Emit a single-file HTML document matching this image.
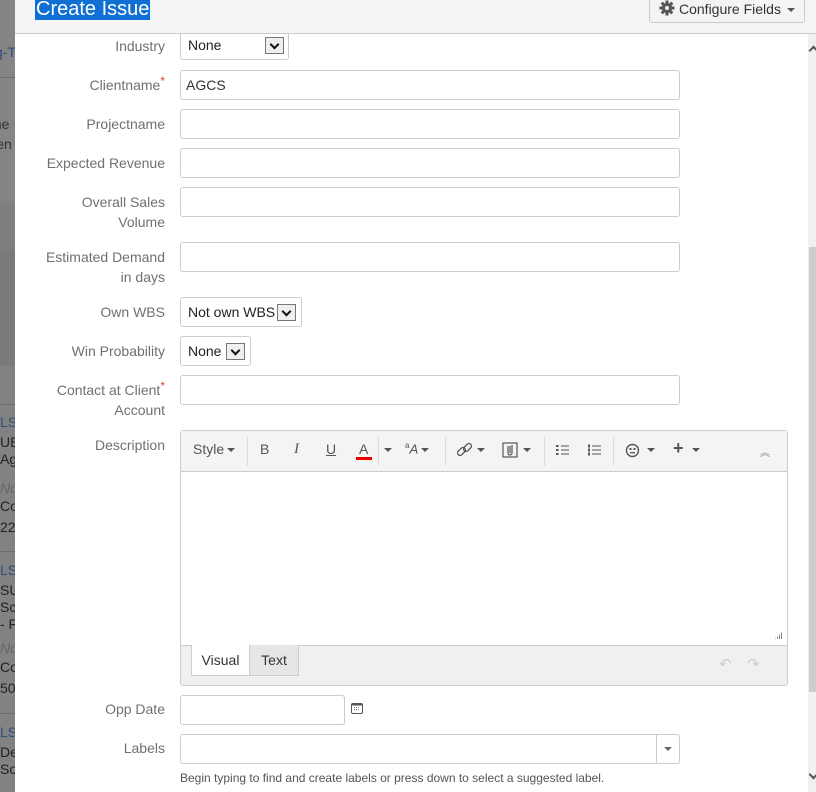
<!DOCTYPE html>
<html><head><meta charset="utf-8"><style>
*{box-sizing:border-box;margin:0;padding:0}
body{width:816px;height:792px;overflow:hidden;background:#fff;font-family:"Liberation Sans",Arial,sans-serif;position:relative}
.a{position:absolute;white-space:nowrap}
.lbl{position:absolute;right:651px;font-size:14px;color:#707070;text-align:right;line-height:20px;white-space:nowrap}
.inp{position:absolute;left:180px;width:500px;height:30px;border:1px solid #ccc;border-radius:3px;background:#fff;font-size:14px;color:#333;padding:6px 5px}
.sel{position:absolute;left:180px;height:30px;border:1px solid #ccc;border-radius:3px;background:#fff;font-size:14px;color:#222;padding:6px 7px;white-space:nowrap}
.dd{position:absolute;top:6px;width:19px;height:17px;border:1px solid #767676;background:#efefef}
.dd:after{content:"";position:absolute;left:5px;top:3px;width:5px;height:5px;border-right:2px solid #111;border-bottom:2px solid #111;transform:rotate(45deg)}
.req{color:#d04437;font-size:12px;vertical-align:top;position:relative;top:-4px}
.tb{position:absolute;top:441px;font-size:14px;color:#555;white-space:nowrap}
.car{display:inline-block;width:0;height:0;border-left:4px solid transparent;border-right:4px solid transparent;border-top:4px solid #555;vertical-align:middle;margin-left:3px}
.sep{position:absolute;top:437px;width:1px;height:29px;background:#ddd}
</style></head><body>
<div class="a" style="left:0;top:0;width:15px;height:792px;background:#828282;overflow:hidden;font-size:14px;line-height:20px">
 <div class="a" style="top:0;left:0;width:15px;height:200px;background:#858585"></div>
 <div class="a" style="top:42px;left:-5px;color:#2d4e7a">g-T</div>
 <div class="a" style="top:77px;left:0;width:15px;height:1px;background:#6e6e6e"></div>
 <div class="a" style="top:114px;left:-10px;color:#333">me</div>
 <div class="a" style="top:134px;left:-10px;color:#333">lien</div>
 <div class="a" style="top:205px;left:0;width:15px;height:45px;background:#7e7e7e"></div>
 <div class="a" style="top:250px;left:0;width:15px;height:116px;background:#7a7a7a"></div>
 <div class="a" style="top:404px;left:0;width:15px;height:1px;background:#6e6e6e"></div>
 <div class="a" style="top:412px;left:0;color:#2d4e7a">LS</div>
 <div class="a" style="top:434px;left:0;color:#222;line-height:17px">UE<br>Ag</div>
 <div class="a" style="top:478px;left:0;color:#666;font-style:italic">No</div>
 <div class="a" style="top:496px;left:0;color:#222">Co</div>
 <div class="a" style="top:517px;left:0;color:#222">22</div>
 <div class="a" style="top:551px;left:0;width:15px;height:1px;background:#6e6e6e"></div>
 <div class="a" style="top:560px;left:0;color:#2d4e7a">LS</div>
 <div class="a" style="top:582px;left:0;color:#222;line-height:17px">SU<br>Sc<br>- F</div>
 <div class="a" style="top:638px;left:0;color:#666;font-style:italic">No</div>
 <div class="a" style="top:657px;left:0;color:#222">Co</div>
 <div class="a" style="top:678px;left:0;color:#222">50</div>
 <div class="a" style="top:713px;left:0;width:15px;height:1px;background:#6e6e6e"></div>
 <div class="a" style="top:722px;left:0;color:#2d4e7a">LS</div>
 <div class="a" style="top:744px;left:0;color:#222;line-height:17px">De<br>So</div>
</div>

<div class="a" style="left:808px;top:34px;width:8px;height:758px;background:#f0f0f0"></div>
<div class="a" style="left:809px;top:247px;width:7px;height:445px;background:#cdcdcd"></div>
<div class="a" style="left:810px;top:47px;width:7px;height:7px;border-left:2px solid #555;border-top:2px solid #555;transform:rotate(45deg)"></div>
<div class="a" style="left:810px;top:771px;width:7px;height:7px;border-right:2px solid #555;border-bottom:2px solid #555;transform:rotate(45deg)"></div>

<div class="lbl" style="top:36px">Industry</div>
<div class="sel" style="top:30px;width:109px">None<span class="dd" style="left:84px"></span></div>

<div class="a" style="left:15px;top:0;width:801px;height:34px;background:#f5f5f5;border-bottom:1px solid #ccc"></div>
<div class="a" style="left:35px;top:-2px;height:22px;background:#0f6fd3;color:#fff;font-size:20px;line-height:22px;padding:0 1px">Create Issue</div>
<div class="a" style="left:649px;top:-6px;width:156px;height:29px;border:1px solid #ccc;border-radius:3px;background:#f4f4f4;font-size:14px;color:#333;padding:6px 0 0 29px;line-height:16px">Configure Fields<span class="car" style="margin-left:6px"></span></div>
<svg class="a" style="left:659px;top:0" width="16" height="16" viewBox="0 0 16 16"><g fill="#555"><circle cx="8" cy="8" r="5"/><rect x="6.5" y="0.5" width="3" height="15"/><rect x="0.5" y="6.5" width="15" height="3"/><rect x="6.5" y="0.5" width="3" height="15" transform="rotate(45 8 8)"/><rect x="6.5" y="0.5" width="3" height="15" transform="rotate(-45 8 8)"/></g><circle cx="8" cy="8" r="2" fill="#f4f4f4"/></svg>

<div class="lbl" style="top:75px">Clientname<span class="req">*</span></div>
<div class="inp" style="top:70px">AGCS</div>
<div class="lbl" style="top:114px">Projectname</div>
<div class="inp" style="top:109px"></div>
<div class="lbl" style="top:153px">Expected Revenue</div>
<div class="inp" style="top:148px"></div>
<div class="lbl" style="top:192px">Overall Sales<br>Volume</div>
<div class="inp" style="top:187px"></div>
<div class="lbl" style="top:247px">Estimated Demand<br>in days</div>
<div class="inp" style="top:242px"></div>
<div class="lbl" style="top:302px">Own WBS</div>
<div class="sel" style="top:297px;width:122px">Not own WBS<span class="dd" style="left:96px"></span></div>
<div class="lbl" style="top:341px">Win Probability</div>
<div class="sel" style="top:336px;width:71px">None<span class="dd" style="left:45px"></span></div>
<div class="lbl" style="top:380px">Contact at Client<span class="req">*</span><br>Account</div>
<div class="inp" style="top:375px"></div>
<div class="lbl" style="top:435px">Description</div>

<div class="a" style="left:180px;top:430px;width:608px;height:256px;border:1px solid #ccc;border-radius:3px;background:#fff;overflow:hidden">
 <div class="a" style="left:0;top:0;width:608px;height:41px;background:#f4f4f4;border-bottom:1px solid #ccc"></div>
 <div class="a" style="left:0;top:214px;width:608px;height:42px;background:#f0f0f0;border-top:1px solid #ccc"></div>
 <div class="a" style="left:10px;top:214px;width:59px;height:31px;background:#fff;border:1px solid #ccc;border-top:none;font-size:14px;color:#333;text-align:center;line-height:30px">Visual</div>
 <div class="a" style="left:69px;top:214px;width:49px;height:31px;background:#e6e6e6;border:1px solid #ccc;border-left:none;border-top:none;font-size:14px;color:#333;text-align:center;line-height:30px">Text</div>
 <div class="a" style="left:538px;top:224px;font-size:15px;color:#ccc">↶</div>
 <div class="a" style="left:566px;top:224px;font-size:15px;color:#ccc">↷</div>
 <div class="a" style="left:594px;top:200px;width:8px;height:8px;background:repeating-linear-gradient(90deg,#888 0 1px,transparent 1px 2px);clip-path:polygon(100% 0,100% 100%,0 100%)"></div>
</div>
<div class="tb" style="left:193px">Style<span class="car"></span></div>
<div class="sep" style="left:247px"></div>
<div class="tb" style="left:260px">B</div>
<div class="tb" style="left:294px;font-family:'Liberation Serif',serif;font-style:italic;font-size:15px">I</div>
<div class="tb" style="left:326px;text-decoration:underline">U</div>
<div class="tb" style="left:359px">A</div>
<div class="a" style="left:356px;top:457px;width:16px;height:3px;background:#e00"></div>
<div class="sep" style="left:378px;top:437px"></div>
<div class="tb" style="left:381px"><span class="car"></span></div>
<div class="tb" style="left:405px;font-size:13px"><sup style="font-size:8px">a</sup><i>A</i><span class="car"></span></div>
<div class="sep" style="left:445px"></div>
<svg class="a" style="left:456px;top:442px" width="18" height="16" viewBox="0 0 18 16"><g fill="none" stroke="#555" stroke-width="1.3"><rect x="1" y="7" width="9" height="5" rx="2.5" transform="rotate(-45 5.5 9.5)"/><rect x="7" y="3" width="9" height="5" rx="2.5" transform="rotate(-45 11.5 5.5)"/></g></svg>
<div class="tb" style="left:474px"><span class="car"></span></div>
<svg class="a" style="left:502px;top:442px" width="16" height="16" viewBox="0 0 16 16"><g fill="none" stroke="#555" stroke-width="1.2"><rect x="1" y="1" width="14" height="14"/><path d="M6 4v7a2 2 0 004 0V3M8 4v7"/></g></svg>
<div class="tb" style="left:520px"><span class="car"></span></div>
<div class="sep" style="left:544px"></div>
<svg class="a" style="left:556px;top:444px" width="14" height="12" viewBox="0 0 14 12"><g fill="#555"><rect x="0" y="1" width="2.5" height="2"/><rect x="0" y="5" width="2.5" height="2"/><rect x="0" y="9" width="2.5" height="2"/><rect x="5" y="1.5" width="8" height="1"/><rect x="5" y="5.5" width="8" height="1"/><rect x="5" y="9.5" width="8" height="1"/></g></svg>
<svg class="a" style="left:588px;top:444px" width="14" height="12" viewBox="0 0 14 12"><g fill="#555"><rect x="0" y="0.5" width="2" height="3"/><rect x="0" y="4.5" width="2" height="3"/><rect x="0" y="8.5" width="2" height="3"/><rect x="4" y="1.5" width="9" height="1"/><rect x="4" y="5.5" width="9" height="1"/><rect x="4" y="9.5" width="9" height="1"/></g></svg>
<div class="sep" style="left:613px"></div>
<svg class="a" style="left:625px;top:443px" width="15" height="15" viewBox="0 0 15 15"><circle cx="7.5" cy="7.5" r="6" fill="none" stroke="#555" stroke-width="1.4"/><rect x="4.5" y="5" width="2" height="2" fill="#555"/><rect x="8.5" y="5" width="2" height="2" fill="#555"/><rect x="5" y="9" width="5" height="1.3" fill="#555"/></svg>
<div class="tb" style="left:644px"><span class="car"></span></div>
<div class="tb" style="left:673px;font-size:18px;font-weight:bold;top:438px">+</div>
<div class="tb" style="left:689px"><span class="car"></span></div>
<div class="tb" style="left:760px;font-size:10px;color:#888;top:444px">︽</div>

<div class="lbl" style="top:699px">Opp Date</div>
<div class="inp" style="top:695px;width:165px"></div>
<svg class="a" style="left:350px;top:701px" width="14" height="14" viewBox="0 0 14 14"><rect x="1.5" y="2.5" width="11" height="10" rx="1.5" fill="none" stroke="#555"/><rect x="1.5" y="2.5" width="11" height="2" fill="#555"/><g fill="#777"><rect x="4" y="6" width="1" height="1"/><rect x="6" y="6" width="1" height="1"/><rect x="8" y="6" width="1" height="1"/><rect x="4" y="8" width="1" height="1"/><rect x="6" y="8" width="1" height="1"/><rect x="8" y="8" width="1" height="1"/></g></svg>
<div class="lbl" style="top:738px">Labels</div>
<div class="inp" style="top:734px"></div>
<div class="a" style="left:656px;top:735px;width:1px;height:28px;background:#ccc"></div>
<div class="a" style="left:664px;top:747px;border-left:4px solid transparent;border-right:4px solid transparent;border-top:4px solid #666"></div>
<div class="a" style="left:180px;top:771px;font-size:12px;color:#555">Begin typing to find and create labels or press down to select a suggested label.</div>
</body></html>
